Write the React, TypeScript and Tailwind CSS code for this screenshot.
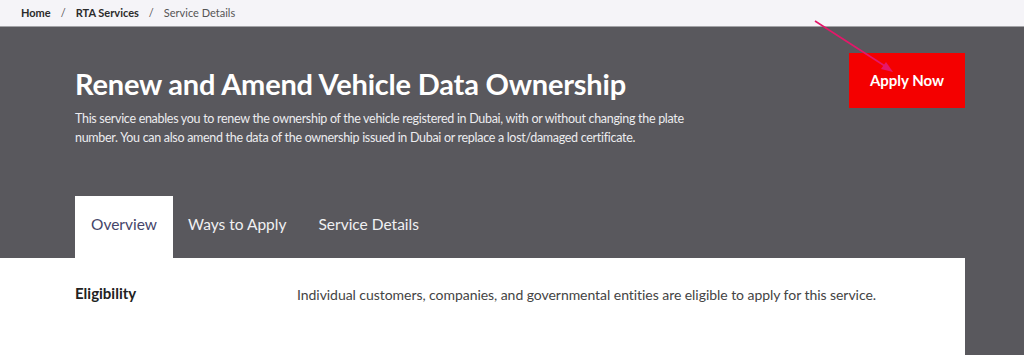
export default function App() {
  const tabs = ["Overview", "Ways to Apply", "Service Details"];

  return (
    <div className="relative h-[355px] w-full overflow-hidden bg-[#59585d] font-['Lato',_'Noto_Sans',_sans-serif]">
      <nav className="flex h-[27px] items-center gap-[10px] border-b border-[#a3a3a7] bg-[#f5f4f8] pl-[21px] text-[11px]">
        <span className="font-bold text-[#2b2b2b]">Home</span>
        <span className="text-[#555]">/</span>
        <span className="font-bold text-[#2b2b2b]">RTA Services</span>
        <span className="text-[#555]">/</span>
        <span className="text-[#555]">Service Details</span>
      </nav>

      <section className="flex justify-between pl-[75px] pr-[59px]">
        <div className="pt-[37px]">
          <h1 className="text-[29px] font-bold leading-[40px] tracking-[-0.2px] text-white">
            Renew and Amend Vehicle Data Ownership
          </h1>
          <p className="mt-[5px] text-[12.5px] leading-[19px] tracking-[-0.3px] text-[#ececef]">
            This service enables you to renew the ownership of the vehicle registered in Dubai, with or without changing the plate
            <br />
            number. You can also amend the data of the ownership issued in Dubai or replace a lost/damaged certificate.
          </p>
        </div>
        <div className="pt-[26px]">
          <button
            type="button"
            className="flex h-[55px] w-[116px] items-center justify-center bg-[#f40000] text-[15px] font-bold text-white"
          >
            Apply Now
          </button>
        </div>
      </section>

      <div className="mt-[49px] flex pl-[75px]">
        {tabs.map((tab, index) => (
          <div
            key={tab}
            className={`flex h-[62px] items-center pb-[4px] text-[15.5px] ${
              index === 0 ? "bg-white px-[16px] text-[#45456a]" : "px-[15px] text-[#f0f0f2]"
            } ${index === 2 ? "ml-[2px]" : ""}`}
          >
            {tab}
          </div>
        ))}
      </div>

      <div className="flex h-[100px] w-[965px] bg-white pl-[75px] pt-[24px]">
        <div className="w-[222px] text-[15px] font-bold text-[#222]">Eligibility</div>
        <p className="pt-[2px] text-[14px] tracking-[-0.05px] text-[#444]">
          Individual customers, companies, and governmental entities are eligible to apply for this service.
        </p>
      </div>

      <svg className="absolute left-0 top-0" width="1024" height="355" viewBox="0 0 1024 355" fill="none">
        <line x1="815" y1="21" x2="888" y2="68" stroke="#e5176a" strokeWidth="1.6" />
        <path d="M893 72 L881 69 L886 62 Z" fill="#e5176a" />
      </svg>
    </div>
  );
}
